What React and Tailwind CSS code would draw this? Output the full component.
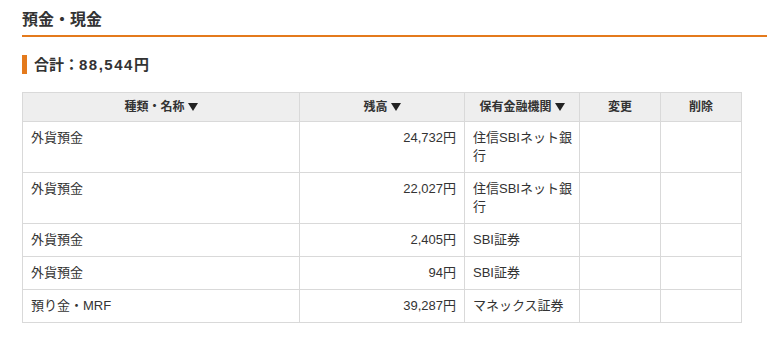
import React from 'react';

const rows = [
  { name: '外貨預金', amount: '24,732円', bank: '住信SBIネット銀行' },
  { name: '外貨預金', amount: '22,027円', bank: '住信SBIネット銀行' },
  { name: '外貨預金', amount: '2,405円', bank: 'SBI証券' },
  { name: '外貨預金', amount: '94円', bank: 'SBI証券' },
  { name: '預り金・MRF', amount: '39,287円', bank: 'マネックス証券' },
];

// small sort arrow drawn as a css triangle
const Sort = () => (
  <span className="inline-block ml-[3px] align-[0px] w-0 h-0 border-l-[5px] border-r-[5px] border-t-[8px] border-l-transparent border-r-transparent border-t-[#222]" />
);

const App = () => {
  return (
    <div
      className="min-h-[361px] bg-white text-[#333] pl-[22px]"
      style={{ fontFamily: '"Liberation Sans", "Noto Sans CJK JP", sans-serif' }}
    >
      <h2 className="pt-[10px] pb-[5px] text-[16px] leading-[20px] font-bold border-b-2 border-[#e47a1c]">
        預金・現金
      </h2>

      <div className="mt-[18px] border-l-[5px] border-[#e47a1c] pl-[7px] text-[15px] leading-[19px] font-bold">
        合計：<span className="tracking-[1.5px]">88,544</span>円
      </div>

      <table className="mt-[18px] w-[720px] table-fixed border-collapse text-[13px] leading-[18px]">
        <colgroup>
          <col className="w-[277px]" />
          <col className="w-[165px]" />
          <col className="w-[115px]" />
          <col className="w-[81px]" />
          <col className="w-[81px]" />
        </colgroup>
        <thead>
          <tr className="bg-[#eeeeee] text-[12px] font-bold">
            <th className="border border-[#d9d9d9] py-[5px] font-bold">種類・名称<Sort /></th>
            <th className="border border-[#d9d9d9] py-[5px] font-bold">残高<Sort /></th>
            <th className="border border-[#d9d9d9] py-[5px] font-bold">保有金融機関<Sort /></th>
            <th className="border border-[#d9d9d9] py-[5px] font-bold">変更</th>
            <th className="border border-[#d9d9d9] py-[5px] font-bold">削除</th>
          </tr>
        </thead>
        <tbody>
          {rows.map((r, i) => (
            <tr key={i} className="align-top">
              <td className="border border-[#d9d9d9] px-[8px] py-[7px]">{r.name}</td>
              <td className="border border-[#d9d9d9] px-[8px] py-[7px] text-right">{r.amount}</td>
              <td className="border border-[#d9d9d9] pl-[8px] pr-[4px] py-[7px]">{r.bank}</td>
              <td className="border border-[#d9d9d9] px-[8px] py-[7px]"></td>
              <td className="border border-[#d9d9d9] px-[8px] py-[7px]"></td>
            </tr>
          ))}
        </tbody>
      </table>
    </div>
  );
};

export default App;
